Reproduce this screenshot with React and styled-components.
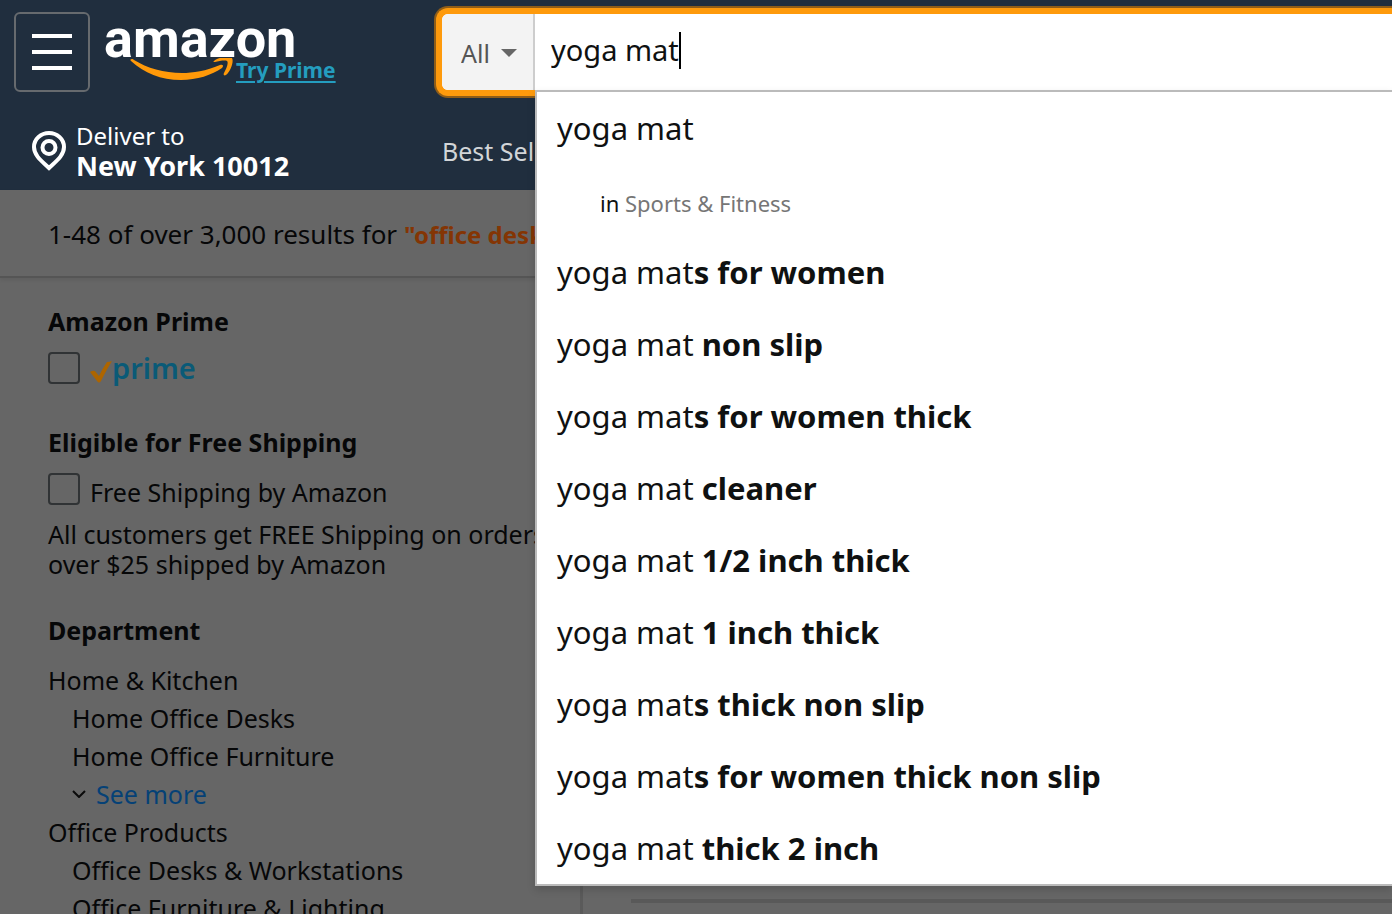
import React from "react";
import styled, { createGlobalStyle } from "styled-components";

const GlobalStyle = createGlobalStyle`
  * { box-sizing: border-box; }
  html { background: #666666; }
  body {
    margin: 0;
    font-family: "Noto Sans", "Open Sans", sans-serif;
    font-size: 25px;
    line-height: 30px;
    color: #060708;
  }
  a { color: inherit; text-decoration: none; }
`;

const Page = styled.div`
  min-height: 100vh;
  overflow: hidden;
  background: #666666;
`;

const Header = styled.header`
  background: #202e3e;
  color: #ffffff;
  padding-bottom: 4px;
`;

const TopRow = styled.div`
  display: flex;
  align-items: flex-start;
  padding: 6px 0 0 14px;
`;

const MenuButton = styled.button`
  flex: none;
  display: flex;
  align-items: center;
  justify-content: center;
  width: 76px;
  height: 80px;
  margin: 6px 14px 0 0;
  padding: 0;
  background: transparent;
  border: 2px solid #666a6e;
  border-radius: 6px;
`;

const Brand = styled.div`
  flex: none;
  width: 330px;
  padding-top: 10px;
`;

const Wordmark = styled.a`
  display: block;
  height: 42px;
  font: 700 54px/46px Roboto, "Noto Sans", sans-serif;
`;

const BrandFoot = styled.div`
  display: flex;
  padding-left: 26px;
  gap: 2px;
`;

const TryPrime = styled.a`
  color: #249dbf;
  font-size: 21px;
  font-weight: 700;
  line-height: 24px;
  text-decoration: underline;
  text-decoration-thickness: 2px;
  text-underline-offset: 3px;
`;

const SearchArea = styled.form`
  flex: 1;
  position: relative;
  margin: 0;
`;

const SearchBar = styled.div`
  display: flex;
  height: 92px;
  padding: 2px 0 2px 2px;
  background: #8f5d18;
  border-radius: 14px 0 0 14px;
`;

const SearchFrame = styled.div`
  flex: 1;
  display: flex;
  border: 6px solid #fe9a0c;
  border-right: 0;
  border-radius: 12px 0 0 12px;
  background: #ffffff;
  overflow: hidden;
`;

const Scope = styled.label`
  display: flex;
  align-items: center;
  width: 93px;
  padding: 2px 0 0 19px;
  background: #f3f3f3;
  border-right: 2px solid #cdcdcd;
`;

const ScopeSelect = styled.select`
  appearance: none;
  width: 40px;
  padding: 0;
  border: 0;
  background: transparent;
  color: #555555;
  font: 400 25px/32px "Noto Sans", sans-serif;
`;

const Query = styled.div`
  display: flex;
  align-items: center;
  padding: 0 0 4px 16px;
`;

const QueryInput = styled.input`
  field-sizing: content;
  padding: 0;
  border: 0;
  outline: 0;
  background: transparent;
  color: #0f1111;
  caret-color: transparent;
  font: 400 29px/40px "Noto Sans", sans-serif;
`;

const Cursor = styled.span`
  width: 2px;
  height: 37px;
  background: #000000;
`;

const Suggestions = styled.ul`
  position: absolute;
  z-index: 2;
  top: 84px;
  left: 101px;
  right: 0;
  margin: 0;
  padding: 0;
  list-style: none;
  background: #ffffff;
  border: 2px solid #bbbbbb;
  border-right: 0;
  box-shadow: 0 4px 8px rgba(0, 0, 0, 0.15);
`;

const Suggestion = styled.li`
  height: 72px;
  padding-left: ${(p) => (p.$nested ? "63px" : "20px")};
  padding-top: ${(p) => (p.$nested ? "5px" : "2px")};
  color: #0f1111;
  font-size: ${(p) => (p.$nested ? "22px" : "31px")};
  line-height: 68px;
  white-space: nowrap;
`;

const Category = styled.span`
  color: #767676;
`;

const SubRow = styled.div`
  display: flex;
  align-items: center;
  padding: 23px 0 5px 32px;
`;

const DeliverLink = styled.a`
  display: flex;
  align-items: center;
  gap: 10px;
  width: 410px;
`;

const DeliverText = styled.span`
  display: flex;
  flex-direction: column;
  font-size: 24px;
`;

const City = styled.b`
  font-size: 27px;
`;

const NavLink = styled.a`
  color: #d2d5d8;
  font-size: 25px;
`;

const ResultsBar = styled.div`
  height: 88px;
  padding: 29px 0 0 48px;
  border-bottom: 2px solid #555555;
  box-shadow: 0 2px 4px rgba(0, 0, 0, 0.08);
  font-size: 26px;
  white-space: nowrap;
`;

const Term = styled.b`
  color: #843504;
  font-size: 24px;
`;

const Content = styled.div`
  display: flex;
`;

const Sidebar = styled.aside`
  flex: none;
  width: 583px;
  padding: 25px 28px 0 48px;
  border-right: 3px solid #5a5a5a;
`;

const Results = styled.main`
  flex: 1;
  padding: 621px 0 0 48px;
`;

const Divider = styled.hr`
  height: 4px;
  margin: 0;
  border: 0;
  background: #595959;
`;

const Heading = styled.h2`
  margin: 0 0 13px;
  font-size: 25px;
  line-height: 36px;
`;

const Filter = styled.label`
  display: flex;
  gap: 10px;
  height: 32px;
  margin-bottom: ${(p) => (p.$tight ? "14px" : "40px")};
`;

const FilterText = styled.span`
  line-height: 38px;
`;

const Check = styled.input`
  appearance: none;
  flex: none;
  width: 32px;
  height: 32px;
  margin: 0;
  border: 2px solid #303335;
  border-radius: 4px;
`;

const PrimeMark = styled.span`
  display: flex;
  align-items: center;
  color: #0a5a77;
  font-size: 29px;
  font-weight: 600;
  line-height: 32px;
`;

const Note = styled.p`
  margin: 0 0 33px;
`;

const Departments = styled.ul`
  margin: 0;
  padding: 0;
  list-style: none;
`;

const Department = styled.li`
  padding-left: ${(p) => (p.$nested ? "24px" : "0")};
  line-height: 38px;
`;

const SeeMore = styled.a`
  display: flex;
  align-items: center;
  gap: 10px;
  color: #054176;
`;

const suggestions = [
  ["yoga mat", "s for women"],
  ["yoga mat ", "non slip"],
  ["yoga mat", "s for women thick"],
  ["yoga mat ", "cleaner"],
  ["yoga mat ", "1/2 inch thick"],
  ["yoga mat ", "1 inch thick"],
  ["yoga mat", "s thick non slip"],
  ["yoga mat", "s for women thick non slip"],
  ["yoga mat ", "thick 2 inch"],
];

export default function App() {
  return (
    <Page>
      <GlobalStyle />
      <Header>
        <TopRow>
          <MenuButton type="button" aria-label="Menu">
            <svg width="40" height="36" viewBox="0 0 40 36">
              <path d="M0 2H40M0 18H40M0 34H40" stroke="#fff" strokeWidth="4" />
            </svg>
          </MenuButton>
          <Brand>
            <Wordmark href="#home">amazon</Wordmark>
            <BrandFoot>
              <svg width="104" height="24" viewBox="0 0 104 24">
                <path
                  d="M2 1C0 1 0 2 1 3C14 15 31 22 51 22C67 22 82 17 92 10C94 8 93 6 90 7C76 13 63 15 52 15C34 15 17 10 4 2C3 1 3 1 2 1Z"
                  fill="#ff9909"
                />
                <path
                  d="M84 3C88 -1 99 -2 102 0C104 3 101 13 96 17C94 18 93 17 94 15C96 11 99 5 97 3C95 2 89 3 85 4C83 4 83 4 84 3Z"
                  fill="#ff9909"
                />
              </svg>
              <TryPrime href="#prime">Try Prime</TryPrime>
            </BrandFoot>
          </Brand>
          <SearchArea>
            <SearchBar>
              <SearchFrame>
                <Scope>
                  <ScopeSelect aria-label="Search in" defaultValue="All">
                    <option>All</option>
                  </ScopeSelect>
                  <svg width="16" height="8" viewBox="0 0 16 8">
                    <path d="M0 0H16L8 8Z" fill="#666" />
                  </svg>
                </Scope>
                <Query>
                  <QueryInput aria-label="Search" defaultValue="yoga mat" />
                  <Cursor />
                </Query>
              </SearchFrame>
            </SearchBar>
            <Suggestions>
              <Suggestion>yoga mat</Suggestion>
              <Suggestion $nested>
                in <Category>Sports &amp; Fitness</Category>
              </Suggestion>
              {suggestions.map(([typed, rest]) => (
                <Suggestion key={rest}>
                  {typed}
                  <b>{rest}</b>
                </Suggestion>
              ))}
            </Suggestions>
          </SearchArea>
        </TopRow>
        <SubRow>
          <DeliverLink href="#location">
            <svg width="34" height="40" viewBox="0 0 34 40" fill="none" stroke="#fff">
              <path
                d="M17 37C11 31 2 25 2 16C2 8 9 2 17 2C25 2 32 8 32 16C32 25 23 31 17 37Z"
                strokeWidth="4"
              />
              <circle cx="17" cy="16.500" r="6.500" strokeWidth="4" />
            </svg>
            <DeliverText>
              <span>Deliver to</span>
              <City>New York 10012</City>
            </DeliverText>
          </DeliverLink>
          <NavLink href="#best">Best Sellers</NavLink>
        </SubRow>
      </Header>
      <ResultsBar>
        1-48 of over 3,000 results for <Term>"office desk"</Term>
      </ResultsBar>
      <Content>
        <Sidebar>
          <Heading>Amazon Prime</Heading>
          <Filter>
            <Check type="checkbox" aria-label="Prime" />
            <PrimeMark>
              <svg width="22" height="32" viewBox="0 0 22 32">
                <path
                  d="M0 20Q3 18 5 19L9 24Q12 17 17 10Q20 10 22 9Q17 17 11 29Q9 32 7 29Z"
                  fill="#ad6500"
                />
              </svg>
              prime
            </PrimeMark>
          </Filter>
          <Heading>Eligible for Free Shipping</Heading>
          <Filter $tight>
            <Check type="checkbox" />
            <FilterText>Free Shipping by Amazon</FilterText>
          </Filter>
          <Note>All customers get FREE Shipping on orders over $25 shipped by Amazon</Note>
          <Heading>Department</Heading>
          <Departments>
            <Department>Home &amp; Kitchen</Department>
            <Department $nested>Home Office Desks</Department>
            <Department $nested>Home Office Furniture</Department>
            <Department $nested>
              <SeeMore href="#more">
                <svg width="14" height="8" viewBox="0 0 14 8">
                  <path d="M1 1L7 7L13 1" fill="none" stroke="#0a0a0a" strokeWidth="2" />
                </svg>
                See more
              </SeeMore>
            </Department>
            <Department>Office Products</Department>
            <Department $nested>Office Desks &amp; Workstations</Department>
            <Department $nested>Office Furniture &amp; Lighting</Department>
          </Departments>
        </Sidebar>
        <Results>
          <Divider />
        </Results>
      </Content>
    </Page>
  );
}
